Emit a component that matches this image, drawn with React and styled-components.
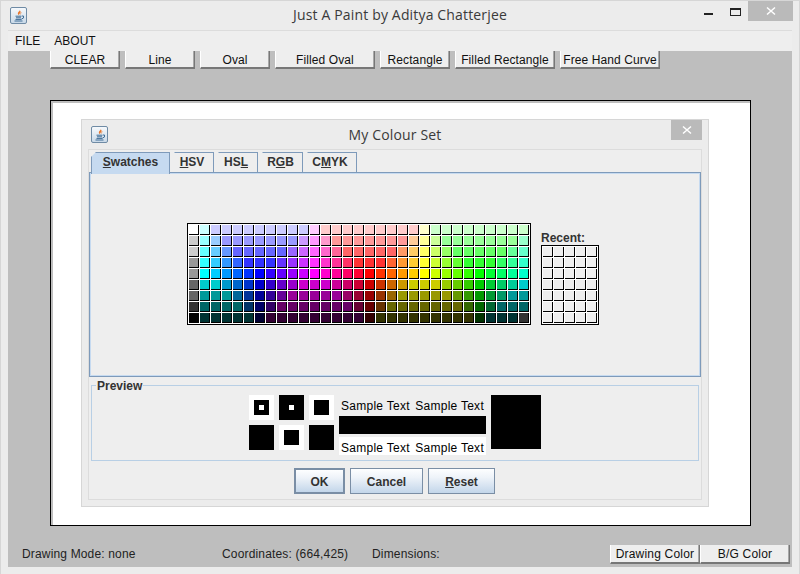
import styled, { createGlobalStyle } from "styled-components";

const GlobalStyle = createGlobalStyle`
  html, body {
    margin: 0;
    padding: 0;
    background: #ececec;
  }
  * {
    box-sizing: border-box;
  }
`;

// the standard Java swatch palette, one string per row
const swatchRows = [
  "fff cff " + "ccf ".repeat(9) + "fcf " + "fcc ".repeat(9) + "ffc " + "cfc ".repeat(9),
  "ccc 9ff 9cf " + "99f ".repeat(7) + "c9f f9f f9c " + "f99 ".repeat(7) + "fc9 ff9 cf9 " + "9f9 ".repeat(7) + "9fc",
  "ccc 6ff 6cf 69f " + "66f ".repeat(5) + "96f c6f f6f f6c f69 " + "f66 ".repeat(5) + "f96 fc6 ff6 cf6 9f6 " + "6f6 ".repeat(5) + "6f9 6fc",
  "999 3ff 3cf 39f 36f " + "33f ".repeat(3) + "63f 93f c3f f3f f3c f39 f36 " + "f33 ".repeat(3) + "f63 f93 fc3 ff3 cf3 9f3 6f3 " + "3f3 ".repeat(3) + "3f6 3f9 3fc",
  "999 0ff 0cf 09f 06f 03f 00f 30f 60f 90f c0f f0f f0c f09 f06 f03 f00 f30 f60 f90 fc0 ff0 cf0 9f0 6f0 3f0 0f0 0f3 0f6 0f9 0fc",
  "666 0cc 0cc 09c 06c 03c 00c 30c 60c 90c c0c c0c c0c c09 c06 c03 c00 c30 c60 c90 cc0 cc0 cc0 9c0 6c0 3c0 0c0 0c3 0c6 0c9 0cc",
  "666 099 099 099 069 039 009 309 609 " + "909 ".repeat(5) + "906 903 900 930 960 " + "990 ".repeat(5) + "690 390 090 093 096 099 099",
  "333 " + "066 ".repeat(4) + "036 006 306 " + "606 ".repeat(7) + "603 600 630 " + "660 ".repeat(7) + "360 060 063 066 066 066",
  "000 " + "033 ".repeat(5) + "003 " + "303 ".repeat(9) + "300 " + "330 ".repeat(9) + "030 033 033 033 333",
].map((row) => row.trim().split(/\s+/));

function JavaIcon() {
  return (
    <IconBox>
      <svg width="12" height="13" viewBox="0 0 12 13">
        <path d="M6.5 0.5 C8 2 4 3 5 5 C5.5 6 6 6.3 6.5 6.5 C5 5 8.5 4 7.5 2.5 Z" fill="#e8762c" />
        <path d="M8.5 3 C7.5 4 7 5 7.5 6.2 C7.6 5 8.6 4.2 8.5 3 Z" fill="#e8762c" />
        <path d="M2.5 7.2 H8.5 M3 8.8 H8 M2.5 10.4 H8.5 M1.5 12 H9.5" stroke="#3f6d96" strokeWidth="1" fill="none" />
        <path d="M9 7 H10.5 V9 L8.5 10" stroke="#3f6d96" strokeWidth="1" fill="none" />
      </svg>
    </IconBox>
  );
}

function Mnemonic({ children }) {
  return <Under>{children}</Under>;
}

function Recents() {
  const cells = [];
  for (let i = 0; i < 35; i++) cells.push(<RecentCell key={i} />);
  return <RecentGrid>{cells}</RecentGrid>;
}

export default function App() {
  return (
    <>
      <GlobalStyle />
      <Win>
        <TitleBar>
          <JavaIcon />
          <TitleText>Just A Paint by Aditya Chatterjee</TitleText>
          <MinBtn />
          <MaxBtn />
          <CloseBtn>
            <CrossIcon />
          </CloseBtn>
        </TitleBar>
        <Body>
          <MenuBar>
            <MenuItem>FILE</MenuItem>
            <MenuItem>ABOUT</MenuItem>
          </MenuBar>
          <GrayArea>
            <ToolRow>
              <ToolBtn $w={70}>CLEAR</ToolBtn>
              <ToolBtn $w={70}>Line</ToolBtn>
              <ToolBtn $w={70}>Oval</ToolBtn>
              <ToolBtn $w={100}>Filled Oval</ToolBtn>
              <ToolBtn $w={70}>Rectangle</ToolBtn>
              <ToolBtn $w={100}>Filled Rectangle</ToolBtn>
              <ToolBtn $w={100}>Free Hand Curve</ToolBtn>
            </ToolRow>
            <Canvas>
              <Dialog>
                <DialogTitle>
                  <JavaIcon />
                  <DialogTitleText>My Colour Set</DialogTitleText>
                  <DialogClose>
                    <CrossIcon />
                  </DialogClose>
                </DialogTitle>
                <DialogBody>
                  <Tabs>
                    <Tab $w={79} $active>
                      <Mnemonic>S</Mnemonic>watches
                    </Tab>
                    <Tab $w={44}>
                      <Mnemonic>H</Mnemonic>SV
                    </Tab>
                    <Tab $w={44}>
                      HS<Mnemonic>L</Mnemonic>
                    </Tab>
                    <Tab $w={45}>
                      R<Mnemonic>G</Mnemonic>B
                    </Tab>
                    <Tab $w={54}>
                      C<Mnemonic>M</Mnemonic>YK
                    </Tab>
                  </Tabs>
                  <TabPanel>
                    <SwatchGrid>
                      {swatchRows.flat().map((c, i) => (
                        <Swatch key={i} $c={"#" + c} />
                      ))}
                    </SwatchGrid>
                    <RecentCol>
                      <RecentLabel>Recent:</RecentLabel>
                      <Recents />
                    </RecentCol>
                  </TabPanel>
                  <PreviewBox>
                    <PreviewLegend>Preview</PreviewLegend>
                    <MarkerGrid>
                      <Marker $light>
                        <MarkerInner $size={15}>
                          <MarkerDot />
                        </MarkerInner>
                      </Marker>
                      <Marker>
                        <MarkerDot />
                      </Marker>
                      <Marker $light>
                        <MarkerInner $size={15} />
                      </Marker>
                      <Marker />
                      <Marker $light>
                        <MarkerInner $size={15} />
                      </Marker>
                      <Marker />
                    </MarkerGrid>
                    <SampleCol>
                      <SampleRow>
                        <span>Sample Text</span>
                        <span>Sample Text</span>
                      </SampleRow>
                      <SampleBand />
                      <SampleRow $white>
                        <span>Sample Text</span>
                        <span>Sample Text</span>
                      </SampleRow>
                    </SampleCol>
                    <BigSwatch />
                  </PreviewBox>
                  <DialogButtons>
                    <DlgBtn $w={51} $focus>
                      OK
                    </DlgBtn>
                    <DlgBtn $w={73}>Cancel</DlgBtn>
                    <DlgBtn $w={67}>
                      <Mnemonic>R</Mnemonic>eset
                    </DlgBtn>
                  </DialogButtons>
                </DialogBody>
              </Dialog>
            </Canvas>
            <StatusRow>
              <StatusText $w={200}>Drawing Mode: none</StatusText>
              <StatusText $w={150}>Coordinates: (664,425)</StatusText>
              <StatusText $w={238}>Dimensions:</StatusText>
              <StatusBtn $w={90}>Drawing Color</StatusBtn>
              <StatusBtn $w={90}>B/G Color</StatusBtn>
            </StatusRow>
          </GrayArea>
        </Body>
      </Win>
    </>
  );
}

function CrossIcon() {
  return (
    <svg width="10" height="10" viewBox="0 0 10 10">
      <path d="M1 1.5 L9 8.5 M9 1.5 L1 8.5" stroke="#fff" strokeWidth="1.5" fill="none" />
    </svg>
  );
}

const Win = styled.div`
  width: 800px;
  height: 574px;
  display: flex;
  flex-direction: column;
  background: #ececec;
  border: 1px solid #d6d6d6;
  border-bottom: none;
  overflow: hidden;
  font-family: "Liberation Sans", Arial, sans-serif;
`;

const TitleBar = styled.div`
  height: 29px;
  flex: none;
  display: flex;
  align-items: flex-start;
  padding-left: 9px;
  padding-top: 6px;
  position: relative;
`;

const IconBox = styled.div`
  width: 17px;
  height: 17px;
  flex: none;
  border: 1px solid #6f8ba5;
  border-radius: 2px;
  background: linear-gradient(#f6f9fc, #c9d9e8);
  display: flex;
  align-items: center;
  justify-content: center;
`;

const TitleText = styled.div`
  position: absolute;
  left: 0;
  right: 0;
  top: 4px;
  text-align: center;
  font-family: "Open Sans", sans-serif;
  font-size: 14px;
  letter-spacing: 0.16px;
  line-height: 20px;
  color: #3a3a3a;
`;

const MinBtn = styled.div`
  position: absolute;
  left: 703px;
  top: 12px;
  width: 9px;
  height: 2px;
  background: #222;
`;

const MaxBtn = styled.div`
  position: absolute;
  left: 729px;
  top: 7px;
  width: 11px;
  height: 8px;
  border: 1px solid #222;
  border-top-width: 2px;
`;

const CloseBtn = styled.div`
  position: absolute;
  left: 747px;
  top: 0;
  width: 45px;
  height: 20px;
  background: #bababa;
  display: flex;
  align-items: center;
  justify-content: center;
`;

const Body = styled.div`
  flex: 1;
  margin: 0 7px 7px 7px;
  display: flex;
  flex-direction: column;
  border-top: 1px solid #dcdcdc;
  min-height: 0;
`;

const MenuBar = styled.div`
  height: 20px;
  flex: none;
  background: #eeeeee;
  display: flex;
  padding-left: 7px;
  gap: 14px;
  font-size: 12px;
  line-height: 21px;
  color: #111;
`;

const MenuItem = styled.div``;

const GrayArea = styled.div`
  flex: 1;
  background: #bebebe;
  display: flex;
  flex-direction: column;
  padding-left: 42px;
  min-height: 0;
`;

const ToolRow = styled.div`
  display: flex;
  gap: 5px;
  height: 18px;
  flex: none;
`;

const ToolBtn = styled.div`
  width: ${(p) => p.$w}px;
  height: 18px;
  background: #eeeeee;
  border-right: 1px solid #777;
  border-bottom: 2px solid #777;
  border-left: 1px solid #fff;
  box-shadow: inset -1px 0 #a8a8a8;
  font-size: 12px;
  letter-spacing: 0.1px;
  line-height: 18px;
  text-align: center;
  color: #111;
  white-space: nowrap;
`;

const Canvas = styled.div`
  width: 701px;
  height: 426px;
  margin-top: 31px;
  flex: none;
  background: #fff;
  border: 1px solid #000;
  box-shadow: inset 2px 2px #bebebe;
  padding: 18px 0 0 30px;
`;

const Dialog = styled.div`
  width: 628px;
  height: 388px;
  background: #ececec;
  border: 1px solid #d6d6d6;
  display: flex;
  flex-direction: column;
`;

const DialogTitle = styled.div`
  height: 29px;
  flex: none;
  position: relative;
  padding: 6px 0 0 9px;
`;

const DialogTitleText = styled(TitleText)`
  top: 5px;
`;

const DialogClose = styled.div`
  position: absolute;
  right: 6px;
  top: 0;
  width: 31px;
  height: 20px;
  background: #bababa;
  display: flex;
  align-items: center;
  justify-content: center;
`;

const DialogBody = styled.div`
  width: 614px;
  height: 351px;
  margin-left: 6px;
  background: #eeeeee;
  border: 1px solid #dcdcdc;
  display: flex;
  flex-direction: column;
  padding-top: 2px;
`;

const Tabs = styled.div`
  display: flex;
  padding-left: 2px;
  height: 20px;
  flex: none;
  position: relative;
  z-index: 1;
`;

const Tab = styled.div`
  width: ${(p) => p.$w}px;
  height: ${(p) => (p.$active ? 22 : 20)}px;
  background: ${(p) => (p.$active ? "#c6daf0" : "#eeeeee")};
  border: 1px solid #7e9aba;
  border-left-color: ${(p) => (p.$active ? "#7e9aba" : "transparent")};
  border-bottom: none;
  clip-path: polygon(5px 0, 100% 0, 100% 100%, 0 100%, 0 5px);
  font-size: 12px;
  font-weight: bold;
  line-height: 19px;
  text-align: center;
  color: #333;
`;

const Under = styled.span`
  text-decoration: underline;
`;

const TabPanel = styled.div`
  width: 612px;
  height: 205px;
  flex: none;
  border: 1px solid #7e9aba;
  box-shadow: inset 0 0 0 1px #c6daf0;
  background: #eeeeee;
  display: flex;
  align-items: flex-start;
  padding: 50px 0 0 97px;
  gap: 10px;
`;

const SwatchGrid = styled.div`
  display: grid;
  grid-template-columns: repeat(31, 10px);
  grid-auto-rows: 10px;
  gap: 1px;
  padding: 1px;
  background: #fff;
  border: 1px solid #000;
`;

const Swatch = styled.div`
  background: ${(p) => p.$c};
  border-right: 1px solid #000;
  border-bottom: 1px solid #000;
`;

const RecentCol = styled.div`
  display: flex;
  flex-direction: column;
  margin-top: 8px;
`;

const RecentLabel = styled.div`
  font-size: 12px;
  font-weight: bold;
  line-height: 14px;
  color: #333;
`;

const RecentGrid = styled.div`
  display: grid;
  grid-template-columns: repeat(5, 10px);
  grid-auto-rows: 10px;
  gap: 1px;
  padding: 1px;
  background: #fff;
  border: 1px solid #000;
`;

const RecentCell = styled.div`
  background: #eeeeee;
  border-right: 1px solid #000;
  border-bottom: 1px solid #000;
`;

const PreviewBox = styled.div`
  width: 608px;
  height: 76px;
  flex: none;
  margin: 8px 0 0 2px;
  border: 1px solid #b8cfe5;
  position: relative;
  display: flex;
  align-items: flex-start;
  padding: 9px 0 0 157px;
  gap: 5px;
`;

const PreviewLegend = styled.div`
  position: absolute;
  left: 4px;
  top: -7px;
  padding: 0 1px;
  background: #eeeeee;
  font-size: 12px;
  font-weight: bold;
  line-height: 14px;
  color: #333;
`;

const MarkerGrid = styled.div`
  display: grid;
  grid-template-columns: repeat(3, 25px);
  grid-auto-rows: 25px;
  gap: 5px;
`;

const Marker = styled.div`
  background: ${(p) => (p.$light ? "#fff" : "#000")};
  display: flex;
  align-items: center;
  justify-content: center;
`;

const MarkerInner = styled.div`
  width: ${(p) => p.$size}px;
  height: ${(p) => p.$size}px;
  background: #000;
  display: flex;
  align-items: center;
  justify-content: center;
`;

const MarkerDot = styled.div`
  width: 5px;
  height: 5px;
  background: #fff;
`;

const SampleCol = styled.div`
  width: 147px;
  display: flex;
  flex-direction: column;
`;

const SampleRow = styled.div`
  height: 18px;
  margin-top: 3px;
  background: ${(p) => (p.$white ? "#fff" : "transparent")};
  display: flex;
  justify-content: space-between;
  padding: 0 2px;
  font-size: 12px;
  letter-spacing: 0.27px;
  line-height: ${(p) => (p.$white ? 22 : 16)}px;
  color: #000;
`;

const SampleBand = styled.div`
  height: 18px;
  background: #000;
`;

const BigSwatch = styled.div`
  width: 50px;
  height: 54px;
  background: #000;
`;

const DialogButtons = styled.div`
  display: flex;
  justify-content: center;
  gap: 5px;
  margin-top: 7px;
  padding-right: 1px;
`;

const DlgBtn = styled.div`
  width: ${(p) => p.$w}px;
  height: 26px;
  border: ${(p) => (p.$focus ? "2px solid #7a8ea5" : "1px solid #7a8ea5")};
  background: linear-gradient(#fdfeff, #eef3f9 35%, #c3d6ea);
  font-size: 12px;
  font-weight: bold;
  line-height: ${(p) => (p.$focus ? 24 : 26)}px;
  text-align: center;
  color: #333;
`;

const StatusRow = styled.div`
  display: flex;
  align-items: center;
  height: 19px;
  margin: 19px 0 0 -28px;
  flex: none;
`;

const StatusText = styled.div`
  width: ${(p) => p.$w}px;
  flex: none;
  font-size: 12px;
  letter-spacing: 0.16px;
  line-height: 21px;
  color: #222;
`;

const StatusBtn = styled(ToolBtn)`
  height: 19px;
  letter-spacing: 0.2px;
  line-height: 19px;
`;
